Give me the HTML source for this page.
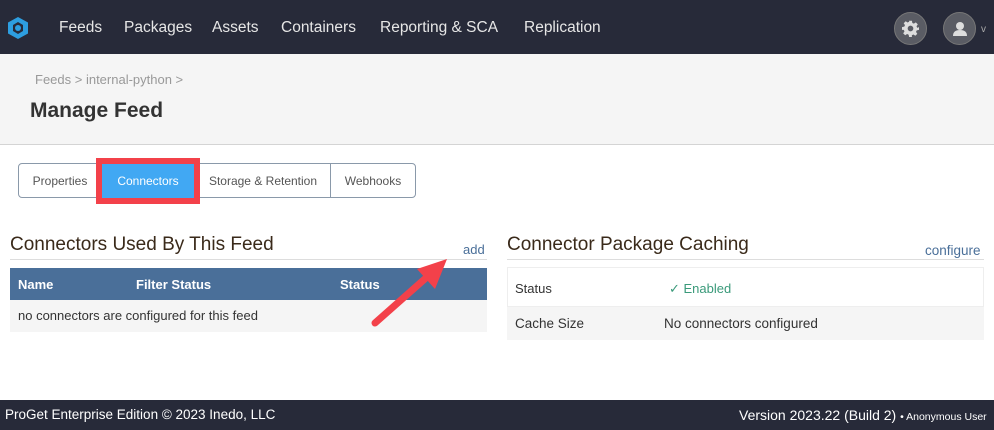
<!DOCTYPE html>
<html><head><meta charset="utf-8"><style>
*{margin:0;padding:0;box-sizing:border-box}
body{width:994px;height:430px;position:relative;overflow:hidden;background:#fff;font-family:"Liberation Sans",sans-serif;color:#333}
.a{position:absolute;white-space:nowrap}
.nav{left:0;top:0;width:994px;height:54px;background:#272a39}
.nl{top:19px;color:#e6e6e6;font-size:15.5px}
.hdr{left:0;top:54px;width:994px;height:91px;background:#f5f5f5;border-bottom:1px solid #d4d4d4}
.tab{top:163px;height:35px;border:1px solid #8a99aa;font-size:12px;color:#555;line-height:35px;text-align:center}
.circ{top:12px;width:33px;height:33px;border-radius:50%;background:#5a5c64;border:1px solid #777}
</style></head><body>
<div class="a nav"></div>
<svg class="a" style="left:6px;top:16px" width="24" height="24" viewBox="0 0 24 24"><polygon points="12,1 22,6.5 22,17.5 12,23 2,17.5 2,6.5" fill="#2d9ee0"/><polygon points="12,6 17,9 17,15 12,18 7,15 7,9" fill="#272a39"/><circle cx="12" cy="12" r="3" fill="#2d9ee0"/></svg>
<div class="a nl" style="left:59px">Feeds</div>
<div class="a nl" style="left:124px">Packages</div>
<div class="a nl" style="left:212px">Assets</div>
<div class="a nl" style="left:281px">Containers</div>
<div class="a nl" style="left:380px">Reporting &amp; SCA</div>
<div class="a nl" style="left:524px">Replication</div>
<div class="a circ" style="left:894px"></div>
<svg class="a" style="left:902px;top:20px" width="17" height="17" viewBox="0 0 24 24"><path fill="#ddd" d="M10 1h4l.6 3.2 2.2 1 2.7-1.8 2.8 2.8-1.8 2.7 1 2.2L24 10v4l-3.2.6-1 2.2 1.8 2.7-2.8 2.8-2.7-1.8-2.2 1L14 24h-4l-.6-3.2-2.2-1-2.7 1.8-2.8-2.8 1.8-2.7-1-2.2L0 14v-4l3.2-.6 1-2.2-1.8-2.7 2.8-2.8 2.7 1.8 2.2-1zM12 8a4 4 0 100 8 4 4 0 000-8z"/></svg>
<div class="a circ" style="left:943px"></div>
<svg class="a" style="left:950px;top:19px" width="20" height="20" viewBox="0 0 20 20"><circle cx="10" cy="7" r="4" fill="#ddd"/><path d="M3 17 Q3 11 10 11 Q17 11 17 17Z" fill="#ddd"/></svg>
<div class="a" style="left:981px;top:24px;color:#aaa;font-size:10px">v</div>
<div class="a hdr"></div>
<div class="a" style="left:35px;top:72px;font-size:13px;color:#999">Feeds &gt; internal-python &gt;</div>
<div class="a" style="left:30px;top:99px;font-size:21px;font-weight:bold;color:#333">Manage Feed</div>
<div class="a tab" style="left:18px;top:163px;width:84px;border-radius:4px 0 0 4px">Properties</div>
<div class="a tab" style="left:196px;width:135px;border-left:none">Storage &amp; Retention</div>
<div class="a tab" style="left:330px;width:86px;border-radius:0 4px 4px 0">Webhooks</div>
<div class="a" style="left:96px;top:158px;width:104px;height:46px;background:#f3414a"></div>
<div class="a" style="left:102px;top:164px;width:92px;height:34px;background:#41a8f3;color:#fff;font-size:12px;line-height:34px;text-align:center">Connectors</div>
<div class="a" style="left:10px;top:234px;font-size:19px;color:#3a2a1a">Connectors Used By This Feed</div>
<div class="a" style="left:463px;top:242px;font-size:13px;color:#4a6f99">add</div>
<div class="a" style="left:10px;top:259px;width:477px;height:1px;background:#ddd"></div>
<div class="a" style="left:10px;top:268px;width:477px;height:32px;background:#4a6f99"></div>
<div class="a" style="left:18px;top:277px;font-size:13px;font-weight:bold;color:#fff">Name</div>
<div class="a" style="left:136px;top:277px;font-size:13px;font-weight:bold;color:#fff">Filter Status</div>
<div class="a" style="left:340px;top:277px;font-size:13px;font-weight:bold;color:#fff">Status</div>
<div class="a" style="left:10px;top:300px;width:477px;height:32px;background:#f5f5f5"></div>
<div class="a" style="left:18px;top:308px;font-size:13px;color:#333">no connectors are configured for this feed</div>
<svg class="a" style="left:365px;top:255px" width="90" height="80" viewBox="0 0 90 80"><line x1="10" y1="68" x2="62" y2="22" stroke="#f3414a" stroke-width="7" stroke-linecap="round"/><polygon points="82,4 52,14 70,34" fill="#f3414a"/></svg>
<div class="a" style="left:507px;top:234px;font-size:19px;color:#3a2a1a">Connector Package Caching</div>
<div class="a" style="left:925px;top:243px;font-size:13.5px;color:#4a6f99">configure</div>
<div class="a" style="left:507px;top:259px;width:477px;height:1px;background:#ddd"></div>
<div class="a" style="left:507px;top:267px;width:477px;height:40px;border:1px solid #eee"></div>
<div class="a" style="left:515px;top:281px;font-size:13px">Status</div>
<div class="a" style="left:669px;top:281px;font-size:13px;color:#3a9a7a">✓ Enabled</div>
<div class="a" style="left:507px;top:307px;width:477px;height:33px;background:#f5f5f5"></div>
<div class="a" style="left:515px;top:316px;font-size:13.5px">Cache Size</div>
<div class="a" style="left:664px;top:316px;font-size:13.5px">No connectors configured</div>
<div class="a" style="left:0;top:400px;width:994px;height:30px;background:#272a39"></div>
<div class="a" style="left:5px;top:407px;font-size:13.5px;color:#fff">ProGet Enterprise Edition © 2023 Inedo, LLC</div>
<div class="a" style="left:739px;top:407px;font-size:14px;color:#fff">Version 2023.22 (Build 2) <span style="font-size:10.5px">• Anonymous User</span></div>
</body></html>
